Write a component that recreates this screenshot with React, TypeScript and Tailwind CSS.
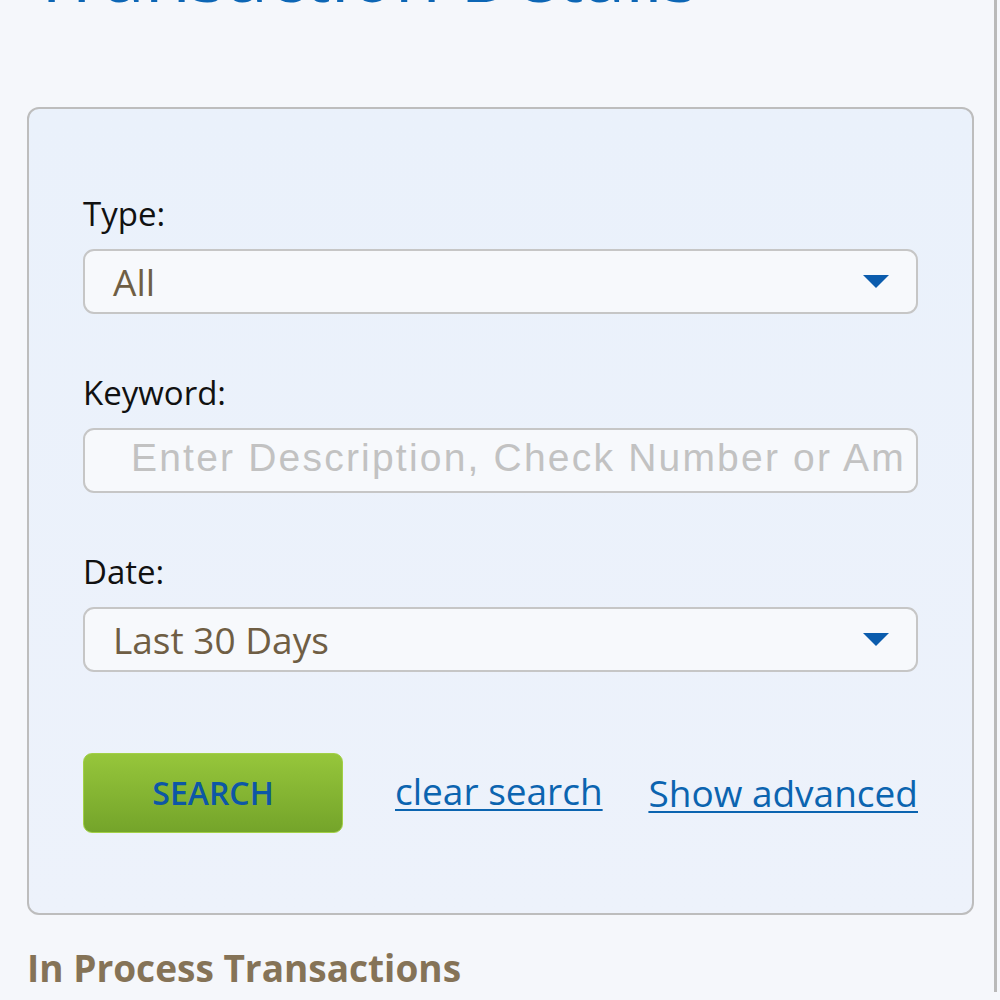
const SelectBox = ({ value }: { value: string }) => {
  return (
    <div className="flex h-[65px] items-center justify-between rounded-[11px] border-2 border-[#c6c6c6] bg-[#f7f9fc] pl-[28px] pr-[27px]">
      <span className="text-[37px] leading-[50px] text-[#6f5e44] [font-family:'Open_Sans',sans-serif]">{value}</span>
      <svg width="26" height="13" viewBox="0 0 26 13">
        <polygon points="0,0 26,0 13,13" fill="#0b5cad" />
      </svg>
    </div>
  );
};

const Label = ({ children }: { children: string }) => {
  return (
    <div className="mb-[15px] h-[40px] text-[33px] leading-[40px] text-[#111111] [font-family:'Open_Sans',sans-serif]">
      {children}
    </div>
  );
};

export default function App() {
  return (
    <div className="min-h-screen overflow-hidden bg-[#f5f7fb]">
      <div className="w-[997px] min-h-screen border-r-[3px] border-[#b9b9b9] bg-[#f5f7fb]">
        <h1 className="mt-[-65px] pl-[31px] text-[75px] leading-[76px] whitespace-nowrap text-[#0d66b5] [font-family:'Open_Sans',sans-serif]">
          Transaction Details
        </h1>

        <div className="mx-[27px] mt-[96px] w-[947px] rounded-[12px] border-2 border-[#bdbdbd] bg-gradient-to-b from-[#eaf1fb] to-[#edf2fb] px-[54px] pt-[85px] pb-[80px]">
          <Label>Type:</Label>
          <SelectBox value="All" />

          <div className="mt-[59px]">
            <Label>Keyword:</Label>
            <input
              type="text"
              placeholder="Enter Description, Check Number or Amount"
              className="block h-[65px] w-full rounded-[11px] border-2 border-[#c6c6c6] bg-[#f7f9fc] pl-[46px] pr-[12px] pb-[5px] text-[39px] tracking-[2.2px] text-[#333] outline-none placeholder:text-[#c2c2c2] [font-family:'Liberation_Sans',Arial,sans-serif]"
            />
          </div>

          <div className="mt-[59px]">
            <Label>Date:</Label>
            <SelectBox value="Last 30 Days" />
          </div>

          <div className="mt-[81px] flex items-center">
            <button className="h-[80px] w-[260px] rounded-[9px] border border-[#a2d046] bg-gradient-to-b from-[#96c63b] to-[#74a42a] text-[32px] font-semibold text-[#0d57a6] [font-family:'Open_Sans',sans-serif]">
              SEARCH
            </button>
            <a href="#" className="ml-[52px] mb-[4px] text-[37px] text-[#0b64b0] underline underline-offset-[4px] decoration-2 [font-family:'Open_Sans',sans-serif]">
              clear search
            </a>
            <a href="#" className="ml-auto text-[37px] text-[#0b64b0] underline underline-offset-[4px] decoration-2 [font-family:'Open_Sans',sans-serif]">
              Show advanced
            </a>
          </div>
        </div>

        <h2 className="mt-[29px] pl-[27px] text-[37px] font-bold leading-[48px] text-[#857357] [font-family:'Open_Sans',sans-serif]">
          In Process Transactions
        </h2>
      </div>
    </div>
  );
}
